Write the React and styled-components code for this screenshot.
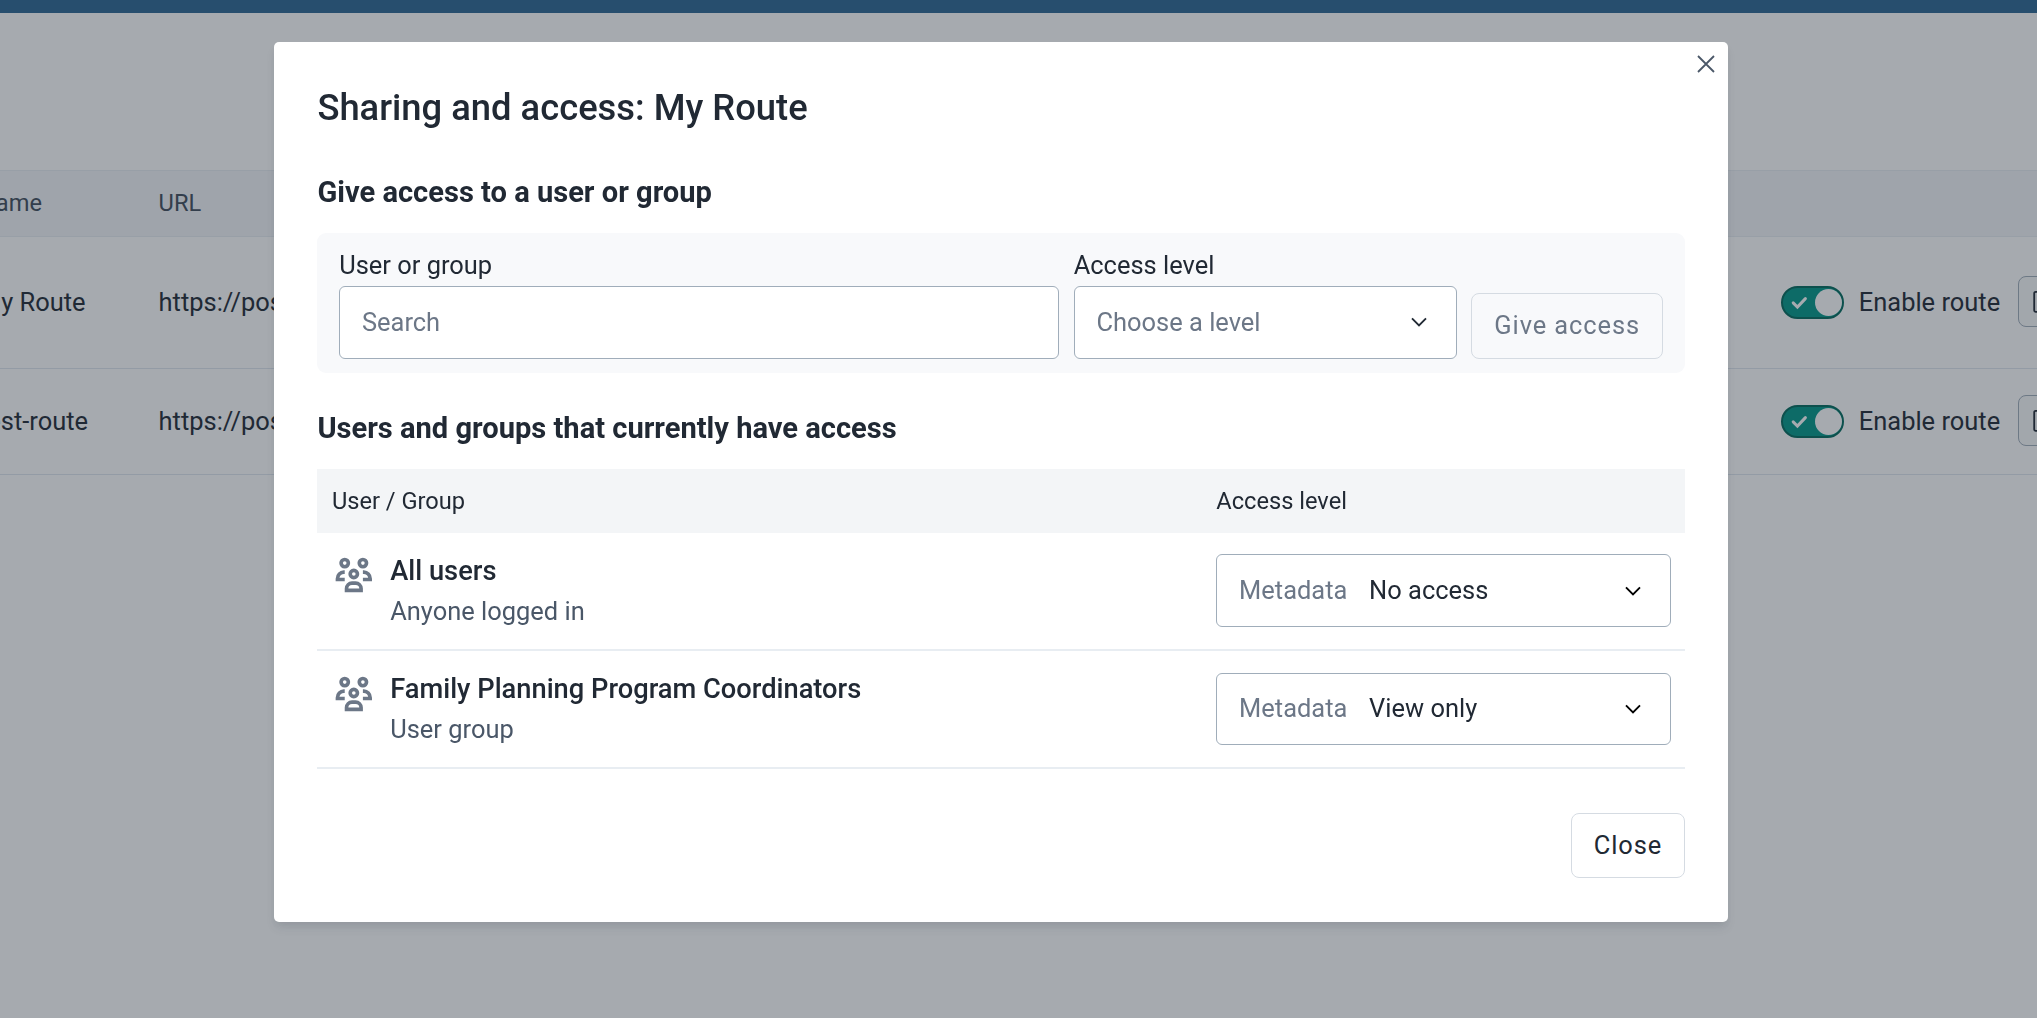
import React from "react";
import styled, { createGlobalStyle } from "styled-components";

const GlobalStyle = createGlobalStyle`
  *, *::before, *::after { box-sizing: border-box; }
  html, body { margin: 0; padding: 0; }
  body {
    background: #fff;
    color: #212934;
    font-family: Roboto, "Liberation Sans", sans-serif;
    font-size: 25.45px;
  }
  h1, h2, p { margin: 0; }
  button, input { font: inherit; }
`;

const Shell = styled.div`
  height: 100vh;
  overflow: hidden;
`;

const HeaderBar = styled.header`
  height: 13px;
  background: #2c6693;
`;

const RoutesTable = styled.section`
  margin: 157px 0 0 -36px;
  border-top: 1px solid #e8edf2;
`;

const RouteRow = styled.div`
  display: grid;
  grid-template-columns: 179.6px 1fr 236.6px 19px;
  align-items: center;
  height: ${(p) => p.$height}px;
  padding-bottom: 2px;
  border-bottom: 1px solid ${(p) => p.$line || "#e8edf2"};
`;

const RouteHeadRow = styled(RouteRow)`
  background: #f3f5f9;
  color: #404b5a;
  font-size: 23.64px;
`;

const RouteCell = styled.div`
  padding-left: 15px;
  white-space: nowrap;
`;

const ToggleCell = styled.div`
  display: flex;
  align-items: center;
  gap: 14.4px;
  white-space: nowrap;
`;

const ToggleTrack = styled.span`
  display: flex;
  align-items: center;
  justify-content: space-between;
  width: 63px;
  height: 33px;
  margin-top: 2px;
  padding: 0 0.6px 0 8px;
  border: 2px solid #00695c;
  border-radius: 17px;
  background: #009688;
  color: #fff;
`;

const ToggleKnob = styled.span`
  width: 27.3px;
  height: 27.3px;
  border-radius: 50%;
  background: #fff;
`;

const RowAction = styled.button`
  display: flex;
  align-items: center;
  width: 150px;
  height: 51px;
  padding: 0 14px;
  border: 1px solid #a0adba;
  border-radius: 8px;
  background: #f9fafb;
  color: #212934;
`;

const Backdrop = styled.div`
  position: fixed;
  inset: 0;
  display: flex;
  align-items: flex-start;
  padding: 42px 0 0 274px;
  background: rgba(33, 43, 54, 0.4);
`;

const Dialog = styled.section`
  position: relative;
  display: flex;
  flex-direction: column;
  width: 1454.4px;
  height: 880px;
  padding: 43.6px 43.4px 44px;
  border-radius: 5px;
  background: #fff;
  box-shadow: 0 7px 11px -2px rgba(33, 43, 54, 0.1), 0 4px 7px -2px rgba(33, 43, 54, 0.06);
`;

const DismissButton = styled.button`
  position: absolute;
  top: 10px;
  right: 10px;
  display: flex;
  padding: 0;
  border: 0;
  background: none;
  color: #4a5768;
`;

const Title = styled.h1`
  font-size: 36.36px;
  font-weight: 500;
  line-height: 44px;
`;

const SectionTitle = styled.h2`
  margin: ${(p) => p.$gap}px 0 21px;
  font-size: 29.09px;
  font-weight: 700;
  line-height: 40px;
`;

const AccessForm = styled.div`
  display: flex;
  align-items: flex-end;
  gap: 14.5px;
  padding: 18px 21.8px 14px;
  border-radius: 9px;
  background: #f8f9fb;
`;

const Field = styled.label`
  display: flex;
  flex-direction: column;
  gap: 7px;
  flex: ${(p) => (p.$width ? `0 0 ${p.$width}px` : "1")};
  line-height: 28px;
`;

const SearchInput = styled.input`
  height: 73px;
  width: 100%;
  padding: 0 21.8px 1px;
  border: 1px solid #a0adba;
  border-radius: 6px;
  background: #fff;
  color: #212934;
  outline: 0;
  &::placeholder { color: #6c7787; opacity: 1; }
`;

const SelectBox = styled.div`
  display: flex;
  align-items: center;
  gap: 21.8px;
  height: ${(p) => p.$height}px;
  padding: 0 26.6px 0 21.8px;
  border: 1px solid #a0adba;
  border-radius: 6px;
  background: #fff;
  white-space: nowrap;
`;

const SelectText = styled.span`
  padding-bottom: ${(p) => p.$lift || 2}px;
  color: ${(p) => (p.$muted ? "#6c7787" : "#212934")};
`;

const ChevronSlot = styled.span`
  display: flex;
  margin-left: auto;
  color: ${(p) => p.$color};
`;

const Button = styled.button`
  height: ${(p) => p.$height}px;
  width: ${(p) => p.$width}px;
  padding: 0 0 2px;
  border: 1px solid #d5dbe2;
  border-radius: 8px;
  background: ${(p) => (p.$disabled ? "#f8f9fb" : "#fff")};
  color: ${(p) => (p.$disabled ? "#6c7787" : "#212934")};
  letter-spacing: 0.91px;
`;

const AccessGrid = styled.div`
  display: grid;
  grid-template-columns: 1fr 454.2px;
  padding: 0 14.5px;
`;

const AccessHead = styled(AccessGrid)`
  align-items: center;
  height: 64px;
  background: #f3f5f7;
  font-size: 23.64px;
`;

const AccessRow = styled(AccessGrid)`
  align-items: start;
  height: 118.2px;
  padding-top: 21.4px;
  border-bottom: 2px solid #e8edf2;
`;

const Principal = styled.div`
  display: flex;
  gap: 14.7px;
  color: #6c7787;
`;

const PrincipalText = styled.div`
  display: flex;
  flex-direction: column;
  gap: 7.2px;
  padding-top: 0.2px;
  line-height: 33px;
`;

const PrincipalName = styled.p`
  color: #212934;
  font-size: 27.27px;
  font-weight: 500;
`;

const PrincipalKind = styled.p`
  color: #4a5768;
`;

const Footer = styled.footer`
  display: flex;
  justify-content: flex-end;
  margin-top: auto;
`;

const Chevron = ({ color }) => (
  <ChevronSlot $color={color}>
    <svg width="20" height="12" viewBox="0 0 20 12" fill="none" stroke="currentColor" strokeWidth="1.9">
      <path d="M3 2.3 10 9.3 17 2.3" />
    </svg>
  </ChevronSlot>
);

const GroupIcon = () => (
  <svg width="43.64" height="43.64" viewBox="0 0 24 24" fill="currentColor" fillRule="evenodd">
    <path d="M7 2a3 3 0 1 1 0 6 3 3 0 0 1 0-6Zm0 2a1 1 0 1 0 0 2 1 1 0 0 0 0-2Z" />
    <path d="M17 2a3 3 0 1 1 0 6 3 3 0 0 1 0-6Zm0 2a1 1 0 1 0 0 2 1 1 0 0 0 0-2Z" />
    <path d="M12 8a3 3 0 1 1 0 6 3 3 0 0 1 0-6Zm0 2a1 1 0 1 0 0 2 1 1 0 0 0 0-2Z" />
    <path d="M7 9H6.5A4.6 4.6 0 0 0 2 13.6V15h5v-2H4.1A2.6 2.6 0 0 1 6.6 11H7Z" />
    <path d="M17 9h.5A4.6 4.6 0 0 1 22 13.6V15h-5v-2h2.9A2.6 2.6 0 0 0 17.4 11H17Z" />
    <path d="M7 21v-2a4 4 0 0 1 4-4h2a4 4 0 0 1 4 4v2Zm2-2h6a2 2 0 0 0-2-2h-2a2 2 0 0 0-2 2Z" />
  </svg>
);

const EnableToggle = () => (
  <ToggleCell>
    <ToggleTrack>
      <svg width="17" height="14" viewBox="0 0 17 14" fill="none" stroke="currentColor" strokeWidth="3" strokeLinecap="round">
        <path d="M2.2 6.9 6.4 11 14.4 2.6" />
      </svg>
      <ToggleKnob />
    </ToggleTrack>
    Enable route
  </ToggleCell>
);

const EditAction = () => (
  <RowAction>
    <svg width="24" height="24" viewBox="0 0 24 24" fill="none" stroke="currentColor" strokeWidth="1.8">
      <rect x="1.2" y="1.8" width="20" height="20" rx="1.5" />
    </svg>
  </RowAction>
);

const routes = [
  { name: "My Route", url: "https://pos", height: 132 },
  { name: "test-route", url: "https://pos", height: 106 },
];

const principals = [
  { name: "All users", kind: "Anyone logged in", level: "No access" },
  { name: "Family Planning Program Coordinators", kind: "User group", level: "View only" },
];

export default function App() {
  return (
    <>
      <GlobalStyle />
      <Shell>
        <HeaderBar />
        <RoutesTable>
          <RouteHeadRow $height={66}>
            <RouteCell>Name</RouteCell>
            <RouteCell>URL</RouteCell>
          </RouteHeadRow>
          {routes.map((route) => (
            <RouteRow key={route.name} $height={route.height} $line="#dfe6ee">
              <RouteCell>{route.name}</RouteCell>
              <RouteCell>{route.url}</RouteCell>
              <EnableToggle />
              <EditAction />
            </RouteRow>
          ))}
        </RoutesTable>
      </Shell>
      <Backdrop>
        <Dialog role="dialog" aria-label="Sharing and access">
          <DismissButton aria-label="Dismiss">
            <svg width="24" height="24" viewBox="0 0 24 24" fill="none" stroke="currentColor" strokeWidth="1.8">
              <path d="M4 4 20 20M20 4 4 20" />
            </svg>
          </DismissButton>
          <Title>Sharing and access: My Route</Title>
          <SectionTitle $gap={42.4}>Give access to a user or group</SectionTitle>
          <AccessForm>
            <Field>
              User or group
              <SearchInput placeholder="Search" />
            </Field>
            <Field as="div" $width={383}>
              Access level
              <SelectBox $height={73}>
                <SelectText $muted $lift={1}>Choose a level</SelectText>
                <Chevron color="#212934" />
              </SelectBox>
            </Field>
            <Button $width={192} $height={66} $disabled>Give access</Button>
          </AccessForm>
          <SectionTitle $gap={35}>Users and groups that currently have access</SectionTitle>
          <AccessHead>
            <span>User / Group</span>
            <span>Access level</span>
          </AccessHead>
          {principals.map((item) => (
            <AccessRow key={item.name}>
              <Principal>
                <GroupIcon />
                <PrincipalText>
                  <PrincipalName>{item.name}</PrincipalName>
                  <PrincipalKind>{item.kind}</PrincipalKind>
                </PrincipalText>
              </Principal>
              <SelectBox $height={72.7}>
                <SelectText $muted>Metadata</SelectText>
                <SelectText>{item.level}</SelectText>
                <Chevron color="#000" />
              </SelectBox>
            </AccessRow>
          ))}
          <Footer>
            <Button $width={114} $height={65}>Close</Button>
          </Footer>
        </Dialog>
      </Backdrop>
    </>
  );
}
